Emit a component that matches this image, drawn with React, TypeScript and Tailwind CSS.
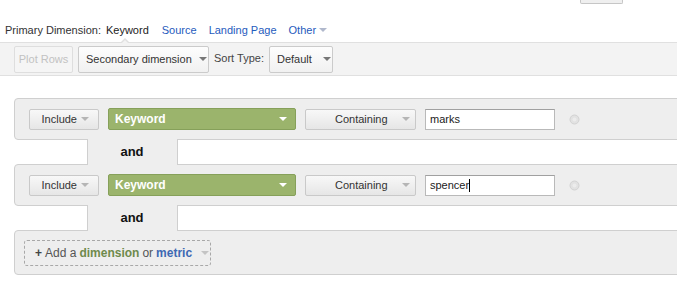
import React from 'react';

function Caret({ color = '#999' }: { color?: string }) {
  return (
    <span
      className="inline-block w-0 h-0 border-x-[4px] border-t-[4px] border-x-transparent"
      style={{ borderTopColor: color }}
    />
  );
}

function GrayButton({ children, className = '' }: { children: React.ReactNode; className?: string }) {
  return (
    <div
      className={`flex items-center h-[21px] border border-[#c9c9c9] rounded-[2px] bg-gradient-to-b from-[#f8f8f8] to-[#e6e6e6] text-[11px] text-[#333] whitespace-nowrap ${className}`}
    >
      {children}
    </div>
  );
}

function FilterRow({ value, cursor }: { value: string; cursor?: boolean }) {
  return (
    <div className="h-[42px] ml-[14px] mr-[-10px] border border-[#cfcfcf] rounded-[4px] bg-[#eeeeee] flex items-center pl-[14px]">
      <GrayButton className="w-[70px] justify-end pr-[9px] gap-[4px]">
        <span>Include</span>
        <Caret color="#b5b5b5" />
      </GrayButton>
      <div className="ml-[9px] w-[188px] h-[22px] rounded-[2px] bg-[#9bb46c] border border-[#86a05a] flex items-center justify-between pl-[6px] pr-[8px]">
        <span className="text-[12px] font-bold text-white">Keyword</span>
        <Caret color="#ffffff" />
      </div>
      <GrayButton className="ml-[9px] w-[111px] pl-[29px] gap-[14px]">
        <span>Containing</span>
        <Caret color="#b5b5b5" />
      </GrayButton>
      <div className="ml-[9px] w-[130px] h-[21px] bg-white border border-[#b9b9b9] border-t-[#a0a0a0] flex items-center pl-[4px] text-[11px] text-[#222]">
        {value}
        {cursor && <span className="inline-block w-px h-[13px] bg-black" />}
      </div>
      <svg className="ml-[14px]" width="11" height="11" viewBox="0 0 11 11">
        <circle cx="5.5" cy="5.5" r="4.5" fill="#e2e2e2" stroke="#d2d2d2" />
        <circle cx="5.5" cy="5.5" r="2" fill="#ececec" />
      </svg>
    </div>
  );
}

function AndRow() {
  return (
    <div className="h-[24px] flex">
      <div className="relative z-10 ml-[87px] -my-px w-[91px] h-[26px] bg-[#eeeeee] border-x border-[#cfcfcf] flex items-center justify-center">
        <span className="text-[13px] font-bold text-[#111] pr-[1px]">and</span>
      </div>
    </div>
  );
}

export default function App() {
  return (
    <div
      className="w-[677px] h-[303px] bg-white overflow-hidden"
      style={{ fontFamily: '"Liberation Sans", Arial, sans-serif' }}
    >
      {/* top button fragment */}
      <div className="h-[4px] flex">
        <div className="ml-[580px] w-[43px] h-[4px] border-x border-b border-[#c6c6c6] bg-[#efefef] rounded-b-[2px]" />
      </div>

      {/* primary dimension */}
      <div className="h-[38px] flex items-end pb-[4px] pl-[5px] text-[11px] leading-[16px] whitespace-nowrap">
        <span className="text-[#333]">Primary Dimension:</span>
        <span className="ml-[5px] text-[#222]">Keyword</span>
        <span className="ml-[13px] text-[#1f5bbd]">Source</span>
        <span className="ml-[12px] text-[#1f5bbd]">Landing Page</span>
        <span className="ml-[12px] text-[#1f5bbd] flex items-center gap-[3px]">
          Other
          <Caret color="#b0b8cc" />
        </span>
      </div>

      {/* toolbar */}
      <div className="relative h-[34px] border-y border-[#e0e0e0] bg-[#f3f3f3] flex items-center pl-[14px] whitespace-nowrap">
        <div className="absolute left-[120px] top-[-5px] w-0 h-0 border-x-[5px] border-b-[5px] border-x-transparent border-b-[#e0e0e0]" />
        <div className="absolute left-[121px] top-[-3px] w-0 h-0 border-x-[4px] border-b-[4px] border-x-transparent border-b-[#f3f3f3]" />
        <div className="w-[59px] h-[27px] border border-[#dedede] rounded-[2px] bg-[#f5f5f5] flex items-center justify-center text-[11px] text-[#c2c2c2]">
          Plot Rows
        </div>
        <div className="ml-[5px] w-[131px] h-[27px] border border-[#cbcbcb] rounded-[2px] bg-gradient-to-b from-[#fdfdfd] to-[#f1f1f1] flex items-center pl-[7px] gap-[7px] text-[11px] text-[#333]">
          <span>Secondary dimension</span>
          <Caret color="#777" />
        </div>
        <span className="ml-[5px] -mt-[2px] text-[11px] text-[#444]">Sort Type:</span>
        <div className="ml-[5px] w-[64px] h-[27px] border border-[#cbcbcb] rounded-[2px] bg-gradient-to-b from-[#fdfdfd] to-[#f1f1f1] flex items-center pl-[7px] gap-[11px] text-[11px] text-[#333]">
          <span>Default</span>
          <Caret color="#777" />
        </div>
      </div>

      {/* filters */}
      <div className="pt-[22px]">
        <FilterRow value="marks" />
        <AndRow />
        <FilterRow value="spencer" cursor />
        <AndRow />
        <div className="h-[45px] ml-[14px] mr-[-10px] border border-[#cfcfcf] rounded-[4px] bg-[#eeeeee] flex items-center pl-[9px]">
          <div className="w-[187px] h-[26px] border border-dashed border-[#a8a8a8] rounded-[3px] flex items-center pl-[10px] text-[12px] text-[#555] whitespace-nowrap">
            <span className="font-bold text-[#444]">+</span>
            <span className="ml-[3px]">Add a</span>
            <span className="ml-[3px] font-bold text-[#6e8a4c]">dimension</span>
            <span className="ml-[3px]">or</span>
            <span className="ml-[3px] font-bold text-[#3d69b3]">metric</span>
            <span className="ml-[9px] flex">
              <Caret color="#c4c4c4" />
            </span>
          </div>
        </div>
      </div>
    </div>
  );
}
